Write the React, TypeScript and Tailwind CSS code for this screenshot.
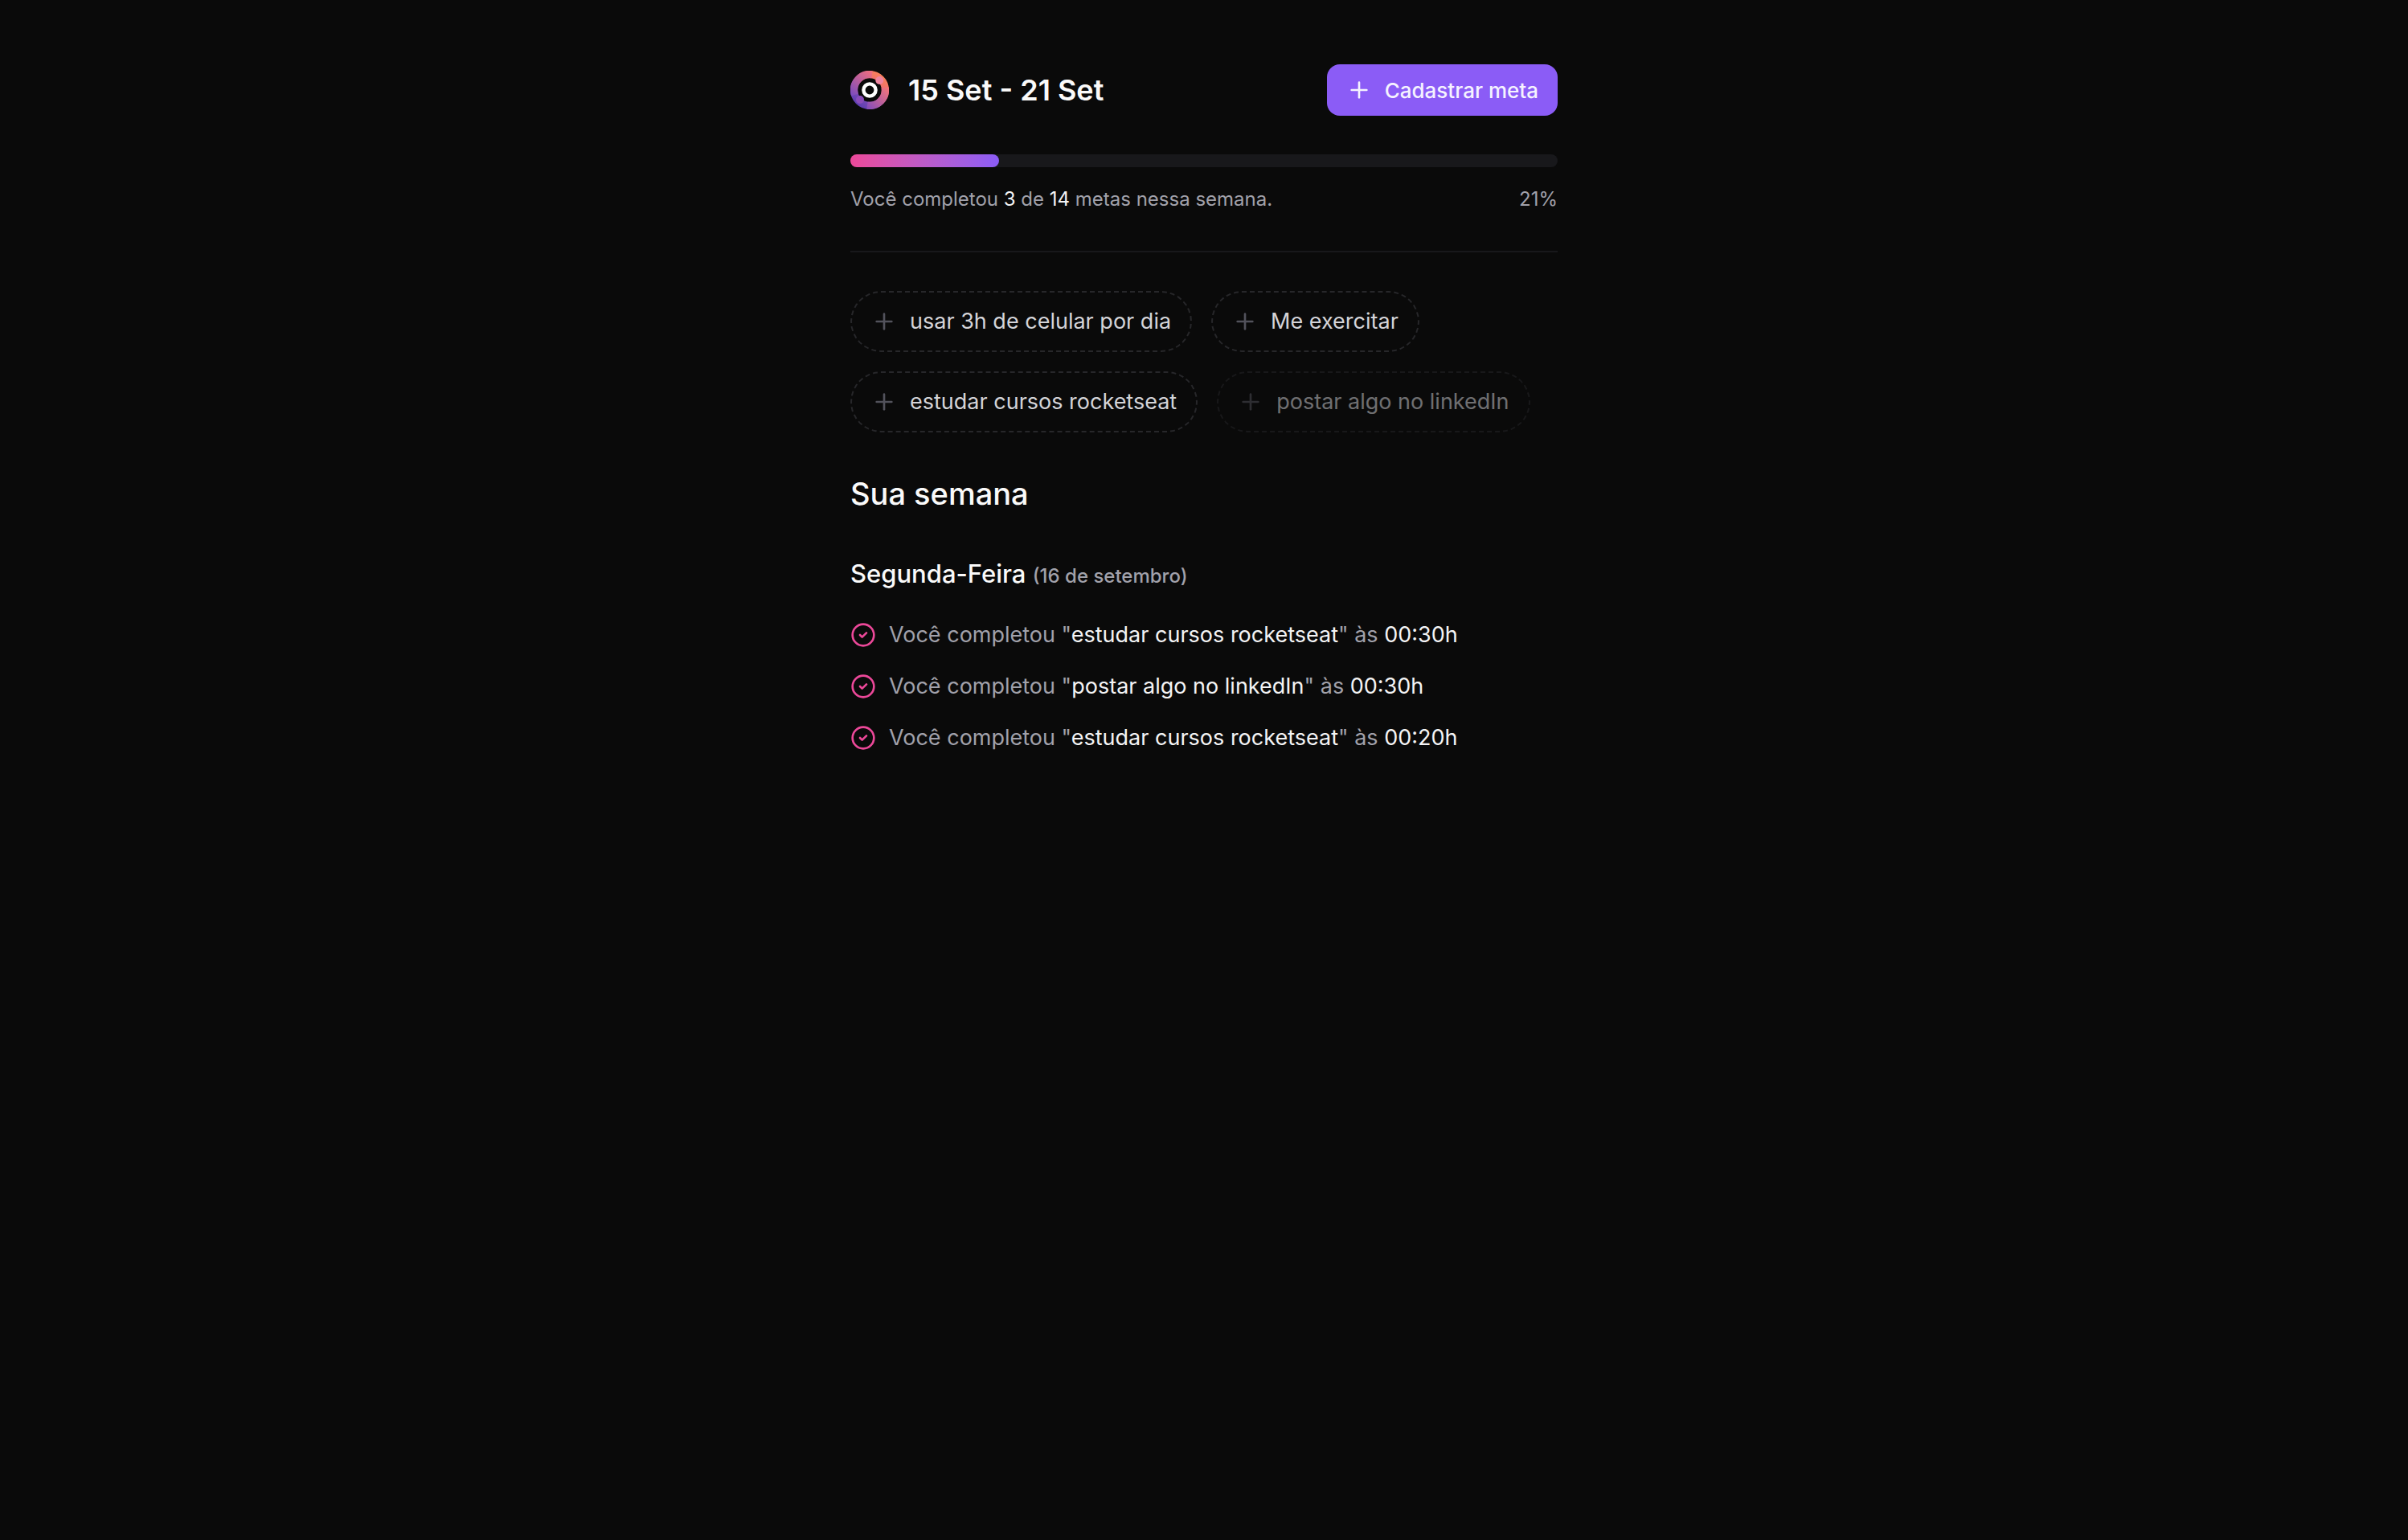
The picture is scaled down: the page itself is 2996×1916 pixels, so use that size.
import { CircleCheck, Plus } from "lucide-react";

const completed = 3;
const total = 14;
const percentage = 21;

const pendingGoals = [
  { title: "usar 3h de celular por dia", done: false },
  { title: "Me exercitar", done: false },
  { title: "estudar cursos rocketseat", done: false },
  { title: "postar algo no linkedIn", done: true },
];

const completions = [
  { title: "estudar cursos rocketseat", time: "00:30h" },
  { title: "postar algo no linkedIn", time: "00:30h" },
  { title: "estudar cursos rocketseat", time: "00:20h" },
];

function OrbitLogo() {
  return (
    <svg viewBox="0 0 48 48" className="size-12" aria-hidden="true">
      <defs>
        <linearGradient id="ring" x1="40" y1="4" x2="8" y2="44" gradientUnits="userSpaceOnUse">
          <stop offset="0" stopColor="#fb8356" />
          <stop offset="0.4" stopColor="#e8697c" />
          <stop offset="0.7" stopColor="#7d4bb8" />
          <stop offset="1" stopColor="#5a3db0" />
        </linearGradient>
        <linearGradient id="upper" x1="30" y1="2" x2="4" y2="32" gradientUnits="userSpaceOnUse">
          <stop offset="0" stopColor="#f5707c" />
          <stop offset="1" stopColor="#7d4cbd" />
        </linearGradient>
        <linearGradient id="lower" x1="46" y1="20" x2="18" y2="46" gradientUnits="userSpaceOnUse">
          <stop offset="0" stopColor="#f5757a" />
          <stop offset="1" stopColor="#7f4bbf" />
        </linearGradient>
      </defs>
      <circle cx="24" cy="24" r="19.4" fill="none" stroke="url(#ring)" strokeWidth="9.2" />
      <path d="M5.5 30A19.4 19.4 0 0 1 27 4.8" fill="none" stroke="url(#upper)" strokeWidth="9.2" />
      <path d="M43.2 21A19.4 19.4 0 0 1 21 43.2" fill="none" stroke="url(#lower)" strokeWidth="9.2" />
      <circle cx="36.3" cy="12" r="5" fill="#ee84a0" />
      <circle cx="12" cy="36" r="5" fill="#8a4cba" />
      <circle cx="24" cy="24" r="7.6" fill="none" stroke="#fff" strokeWidth="4.4" />
    </svg>
  );
}

export default function App() {
  return (
    <div className="min-h-screen bg-[#0a0a0a] font-['Inter',sans-serif] text-[#fafafa] antialiased">
      <main className="mx-auto flex max-w-[960px] flex-col gap-12 px-10 py-20">
        <header className="flex items-center justify-between">
          <div className="flex items-center gap-6">
            <OrbitLogo />
            <h1 className="text-4xl font-semibold">15 Set - 21 Set</h1>
          </div>
          <button
            type="button"
            className="flex h-16 items-center gap-4 rounded-2xl bg-[#8b5cf6] px-6 text-[26px] font-medium text-[#f5f3ff]"
          >
            <Plus className="size-8" />
            Cadastrar meta
          </button>
        </header>

        <section className="flex flex-col gap-6">
          <div
            role="progressbar"
            aria-label="Metas completadas"
            aria-valuenow={completed}
            aria-valuemin={0}
            aria-valuemax={total}
            className="h-4 rounded-full bg-[#18181b]"
          >
            <div
              className="h-4 rounded-full bg-linear-to-r from-[#ec4899] to-[#8b5cf6]"
              style={{ width: `${percentage}%` }}
            />
          </div>
          <div className="flex items-center justify-between text-2xl text-[#a1a1aa]">
            <span>
              Você completou <span className="text-[#f4f4f5]">{completed}</span> de{" "}
              <span className="text-[#f4f4f5]">{total}</span> metas nessa semana.
            </span>
            <span>{percentage}%</span>
          </div>
        </section>

        <hr className="h-0.5 border-0 bg-[#18181b]" />

        <div className="flex flex-wrap gap-6">
          {pendingGoals.map((goal) => (
            <button
              key={goal.title}
              type="button"
              disabled={goal.done}
              className="flex items-center gap-4 rounded-full border-2 border-dashed border-[#27272a] px-6 py-4 text-[27px] leading-10 text-[#d4d4d8] disabled:opacity-50"
            >
              <Plus className="size-8 text-[#52525b]" />
              {goal.title}
            </button>
          ))}
        </div>

        <section className="flex flex-col gap-12">
          <h2 className="text-[38px] leading-14 font-medium">Sua semana</h2>
          <div className="flex flex-col gap-8">
            <h3 className="text-[31px] leading-12 font-medium">
              Segunda-Feira <span className="text-2xl text-[#a1a1aa]">(16 de setembro)</span>
            </h3>
            <ul className="flex flex-col gap-6">
              {completions.map((item, index) => (
                <li key={index} className="flex items-center gap-4">
                  <CircleCheck className="size-8 text-[#ec4899]" />
                  <span className="text-[27px] leading-10 text-[#a1a1aa]">
                    Você completou "<span className="text-[#f4f4f5]">{item.title}</span>" às{" "}
                    <span className="text-[#f4f4f5]">{item.time}</span>
                  </span>
                </li>
              ))}
            </ul>
          </div>
        </section>
      </main>
    </div>
  );
}
